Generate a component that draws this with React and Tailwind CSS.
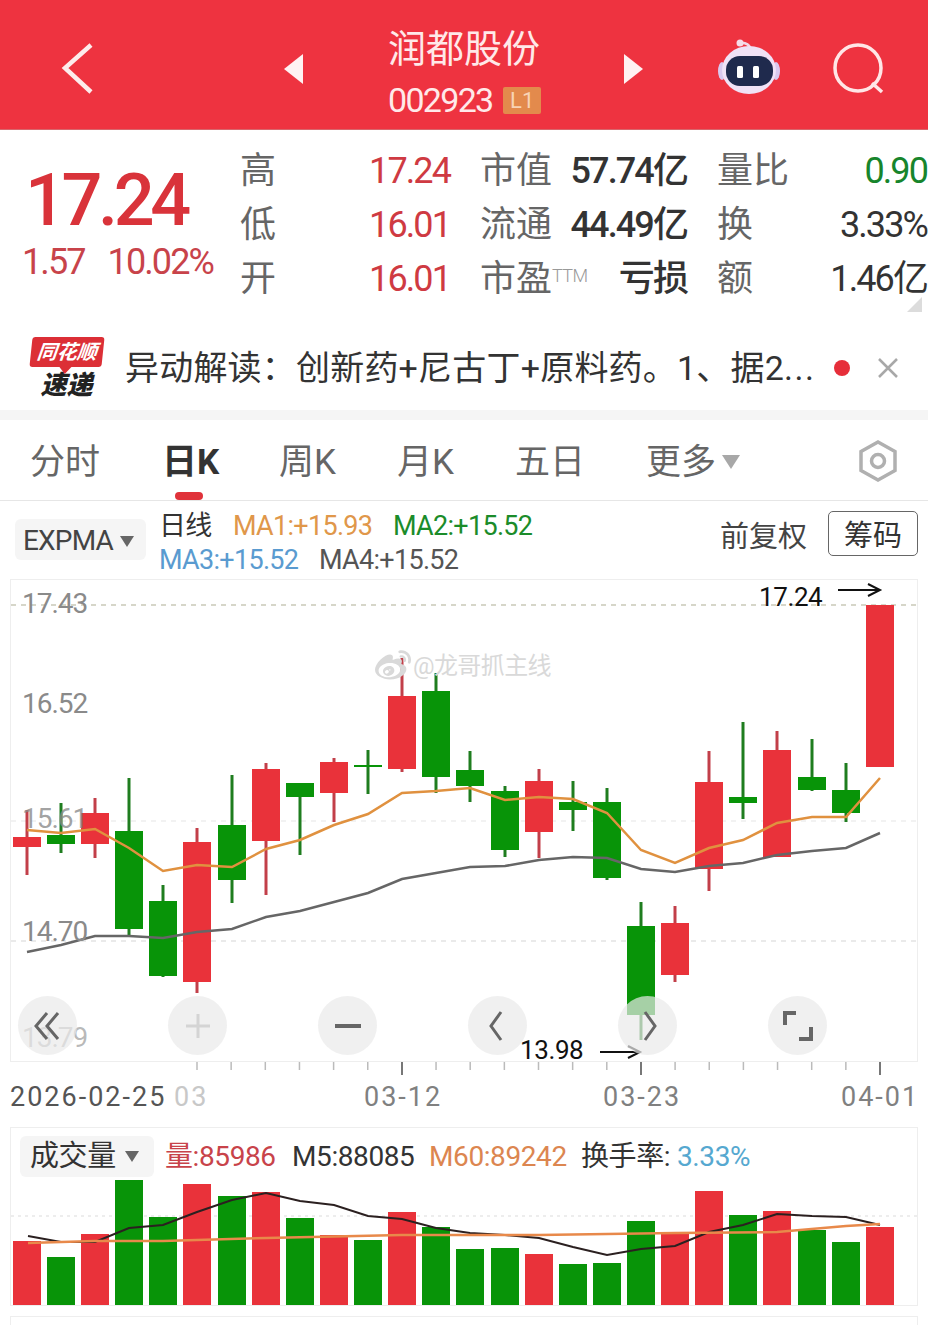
import { FaWeibo } from "react-icons/fa";

const RED = "#e9323a";
const GREEN = "#089408";

// x, body top, body bottom, wick top, wick bottom (page coordinates)
const candles = [
  [27, 837, 847, 810, 875, "r"],
  [61, 835, 844, 803, 853, "g"],
  [95, 813, 844, 798, 858, "r"],
  [129, 831, 929, 778, 935, "g"],
  [163, 901, 976, 885, 977, "g"],
  [197, 842, 982, 828, 993, "r"],
  [232, 825, 880, 775, 903, "g"],
  [266, 769, 841, 763, 895, "r"],
  [300, 783, 797, 783, 855, "g"],
  [334, 762, 793, 758, 822, "r"],
  [368, 765, 767, 750, 794, "g"],
  [402, 696, 769, 658, 772, "r"],
  [436, 691, 777, 673, 793, "g"],
  [470, 770, 786, 751, 802, "g"],
  [505, 791, 850, 786, 857, "g"],
  [539, 781, 832, 769, 858, "r"],
  [573, 802, 810, 781, 831, "g"],
  [607, 802, 878, 788, 880, "g"],
  [641, 926, 1015, 902, 1040, "g"],
  [675, 923, 975, 906, 982, "r"],
  [709, 782, 869, 751, 891, "r"],
  [743, 797, 803, 722, 819, "g"],
  [777, 750, 857, 731, 857, "r"],
  [812, 777, 790, 739, 791, "g"],
  [846, 790, 813, 763, 822, "g"],
  [880, 605, 767, 605, 767, "r"],
];

const ma1 = "27,830 61,833 95,829 129,848 163,871 197,865 232,867 266,849 300,840 334,825 368,814 402,793 436,791 470,788 505,800 539,797 573,799 607,813 641,850 675,863 709,848 743,840 777,823 812,817 846,817 880,778";
const ma2 = "27,952 61,945 95,936 129,936 163,938 197,932 232,929 266,917 300,911 334,902 368,893 402,879 436,873 470,867 505,866 539,860 573,857 607,858 641,869 675,872 709,866 743,863 777,855 812,851 846,848 880,833";

const volumes = [
  [27, 1241, "r"], [61, 1257, "g"], [95, 1234, "r"], [129, 1180, "g"], [163, 1217, "g"], [197, 1184, "r"],
  [232, 1196, "g"], [266, 1192, "r"], [300, 1218, "g"], [334, 1235, "r"], [368, 1240, "g"], [402, 1212, "r"],
  [436, 1227, "g"], [470, 1249, "g"], [505, 1248, "g"], [539, 1254, "r"], [573, 1264, "g"], [607, 1263, "g"],
  [641, 1221, "g"], [675, 1232, "r"], [709, 1191, "r"], [743, 1215, "g"], [777, 1211, "r"], [812, 1230, "g"],
  [846, 1242, "g"], [880, 1227, "r"],
];

const m5 = "28,1236 61,1242 95,1242 129,1228 163,1225 197,1212 232,1200 266,1193 300,1201 334,1205 368,1216 402,1219 436,1228 470,1233 505,1235 539,1238 573,1247 607,1255 641,1249 675,1246 709,1232 743,1225 777,1214 812,1216 846,1217 880,1225";
const m60 = "28,1243 95,1241 163,1241 266,1238 402,1235 539,1235 675,1233 777,1232 846,1226 880,1224";

const minorTicks = Array.from({ length: 21 }, (_, i) => 197 + i * 34.15);

function Stat({ label, value, color, mid }) {
  return (
    <div className="flex items-center justify-between h-[54px]">
      <span className="text-[#666666] text-[36px] leading-none whitespace-nowrap -ml-px">
        {label}
        {mid && <span className="text-[18px] font-light tracking-[-0.6px] text-[#999999] align-[9px]">TTM</span>}
      </span>
      <span className={`text-[36px] leading-none tracking-[-1.9px] whitespace-nowrap ${color}`}>{value}</span>
    </div>
  );
}

function RoundBtn({ children }) {
  return (
    <div className="w-[59px] h-[59px] rounded-full bg-[#e9e9e9]/70 flex items-center justify-center">
      <svg width="36" height="36" viewBox="0 0 36 36" fill="none" strokeWidth="3">
        {children}
      </svg>
    </div>
  );
}

export default function App() {
  return (
    <div className="w-[928px] h-[1325px] overflow-hidden bg-white font-['Roboto','Noto_Sans_CJK_SC',sans-serif]">
      {/* Header */}
      <header className="h-[130px] pt-[8px] bg-[#ee3340] flex items-center border-b border-[#d8666c]">
        <svg className="ml-[60px] shrink-0" width="36" height="54" viewBox="0 0 36 54" fill="none">
          <path d="M31 3 L5 26 L31 50" stroke="#fdecec" strokeWidth="4.5" />
        </svg>
        <div className="ml-[188px] w-0 h-0 border-y-[15px] border-y-transparent border-r-[19px] border-r-[#fff2f2]" />
        <div className="ml-[85px] w-[153px] pt-[4px] flex flex-col shrink-0">
          <span className="text-[38px] leading-[46px] text-[#ffe9e9] whitespace-nowrap">润都股份</span>
          <div className="mt-[13px] flex items-center">
            <span className="text-[34px] leading-[30px] text-[#ffe9e9] tracking-[-1.7px]">002923</span>
            <span className="ml-[11px] w-[39px] h-[27px] bg-[#e38a4c] rounded-[2px] text-[#f8d3b5] text-[22px] leading-[27px] text-center">L1</span>
          </div>
        </div>
        <div className="ml-[83px] w-0 h-0 border-y-[15px] border-y-transparent border-l-[19px] border-l-[#fff2f2]" />
        <svg className="ml-[73px] shrink-0" width="66" height="60" viewBox="716 40 66 60" fill="none">
          <path d="M740 44 Q748 43 751 50" stroke="#f3d7e6" strokeWidth="2.5" />
          <circle cx="740" cy="44" r="3.5" fill="#f6dce8" />
          <ellipse cx="722" cy="72" rx="4" ry="9" fill="#d9c8ee" />
          <ellipse cx="776" cy="72" rx="4" ry="9" fill="#d9c8ee" />
          <ellipse cx="749" cy="71" rx="27" ry="24" fill="#f0e2f6" />
          <rect x="726" y="57" width="47" height="30" rx="14" fill="#1f2a4d" />
          <rect x="737" y="67" width="6" height="12" rx="1.5" fill="#ffffff" />
          <rect x="753" y="67" width="6" height="12" rx="1.5" fill="#ffffff" />
        </svg>
        <svg className="ml-[50px] shrink-0" width="56" height="56" viewBox="832 42 56 56" fill="none">
          <circle cx="858" cy="69" r="23" stroke="#ffe6e6" strokeWidth="3.5" />
          <path d="M872 84 L882 93" stroke="#ffe6e6" strokeWidth="3.5" />
        </svg>
      </header>

      {/* Quote */}
      <section className="relative h-[195px] pt-[14px] flex items-start">
        <div className="w-[241px] shrink-0 pt-[25px]">
          <div className="ml-[25px] text-[#d9333a] text-[72px] leading-[64px] font-medium tracking-[-4.4px]">17.24</div>
          <div className="mt-[9px] flex text-[#c8434a] text-[36px] leading-[40px] tracking-[-1.9px]">
            <span className="ml-[22px]">1.57</span>
            <span className="ml-[23px]">10.02%</span>
          </div>
        </div>
        <div className="grid grid-cols-[209px_206px_209px] gap-x-[31px] shrink-0">
          <div>
            <Stat label="高" value="17.24" color="text-[#cf3a42]" />
            <Stat label="低" value="16.01" color="text-[#cf3a42]" />
            <Stat label="开" value="16.01" color="text-[#cf3a42]" />
          </div>
          <div>
            <Stat label="市值" value="57.74亿" color="text-[#333333] font-medium" />
            <Stat label="流通" value="44.49亿" color="text-[#333333] font-medium" />
            <Stat label="市盈" mid value="亏损" color="text-[#333333] font-medium" />
          </div>
          <div>
            <Stat label="量比" value="0.90" color="text-[#17852c]" />
            <Stat label="换" value="3.33%" color="text-[#333333]" />
            <Stat label="额" value="1.46亿" color="text-[#333333]" />
          </div>
        </div>
        <div className="absolute right-[6px] top-[167px] w-0 h-0 border-l-[15px] border-l-transparent border-b-[15px] border-b-[#dcdcdc]" />
      </section>

      {/* Notice */}
      <section className="h-[85px] flex items-center">
        <div className="ml-[30px] w-[73px] shrink-0 flex flex-col items-center">
          <div className="relative w-[72px] h-[30px] bg-[#dc2f36] rounded-[3px] -skew-x-6 text-white text-[20px] leading-[30px] font-bold italic text-center whitespace-nowrap">
            同花顺
            <div className="absolute left-[30px] top-[30px] w-0 h-0 border-x-[6px] border-x-transparent border-t-[7px] border-t-[#dc2f36]" />
          </div>
          <div className="mt-[5px] text-[#222222] text-[26px] leading-[26px] font-black italic whitespace-nowrap">速递</div>
        </div>
        <div className="ml-[22px] w-[692px] shrink-0 text-[34px] leading-none tracking-[0.2px] text-[#333333] whitespace-nowrap">
          异动解读：创新药+尼古丁+原料药。1、据2<span className="tracking-[1.5px]">...</span>
        </div>
        <div className="ml-[17px] w-[16px] h-[16px] rounded-full bg-[#e62e3a]" />
        <svg className="ml-[26px] shrink-0" width="24" height="24" viewBox="0 0 24 24" fill="none">
          <path d="M3 3 L21 21 M21 3 L3 21" stroke="#a8a8a8" strokeWidth="2.5" />
        </svg>
      </section>

      <div className="h-[10px] bg-[#f5f5f5]" />

      {/* Tabs */}
      <nav className="relative h-[81px] pt-[4px] border-b border-[#e6e6e6] flex items-center text-[35px] leading-none text-[#666666]">
        <span className="ml-[30px] w-[132px]">分时</span>
        <span className="w-[117px] font-bold text-[#333333]">日K</span>
        <span className="w-[118px]">周K</span>
        <span className="w-[118px]">月K</span>
        <span className="w-[131px]">五日</span>
        <span>更多</span>
        <div className="ml-[6px] w-0 h-0 border-x-[9px] border-x-transparent border-t-[14px] border-t-[#a8a8a8]" />
        <svg className="ml-[117px] -mt-[2px] shrink-0" width="42" height="42" viewBox="0 0 42 42" fill="none">
          <path d="M21 2 L38 11.5 V30.5 L21 40 L4 30.5 V11.5 Z" stroke="#b0b0b0" strokeWidth="3.5" />
          <circle cx="21" cy="21" r="6.5" stroke="#b0b0b0" strokeWidth="3.5" />
        </svg>
        <div className="absolute left-[175px] bottom-0 w-[28px] h-[8px] rounded-[4px] bg-[#e0323a]" />
      </nav>

      {/* Legend */}
      <section className="h-[78px] flex items-start">
        <div className="ml-[15px] mt-[18px] w-[131px] h-[41px] rounded-[6px] bg-[#f5f5f5] flex items-center pl-[8px] pt-[3px] shrink-0">
          <span className="text-[28px] leading-none text-[#444444] tracking-[-0.8px]">EXPMA</span>
          <div className="ml-[7px] w-0 h-0 border-x-[7px] border-x-transparent border-t-[11px] border-t-[#666666]" />
        </div>
        <div className="ml-[13px] mt-[8px] w-[541px] shrink-0 text-[27px] leading-[34px] tracking-[-0.7px] whitespace-nowrap">
          <div className="flex">
            <span className="w-[74px] text-[#333333]">日线</span>
            <span className="w-[160px] text-[#e0974a]">MA1:+15.93</span>
            <span className="text-[#1b8c2a]">MA2:+15.52</span>
          </div>
          <div className="flex">
            <span className="w-[160px] text-[#5a9bd0]">MA3:+15.52</span>
            <span className="text-[#555555]">MA4:+15.52</span>
          </div>
        </div>
        <span className="ml-[20px] mt-[18px] text-[29px] leading-[36px] text-[#444444] whitespace-nowrap">前复权</span>
        <div className="ml-[21px] mt-[10px] w-[90px] h-[45px] pt-[3px] rounded-[5px] border border-[#666666] text-[29px] leading-[43px] text-[#333333] text-center shrink-0">筹码</div>
      </section>

      {/* Candles */}
      <section className="relative ml-[10px] w-[908px] h-[483px] border-x border-y border-[#eeeeee]">
        <svg className="absolute -left-px -top-px" width="908" height="483" viewBox="10 579 908 483" fill="none">
          <path d="M11 605 H917" stroke="#c9c9b8" strokeWidth="1.5" strokeDasharray="5 5" />
          <path d="M11 821 H917" stroke="#eeeeee" strokeWidth="1.5" strokeDasharray="5 5" />
          <path d="M11 941 H917" stroke="#e4e4e4" strokeWidth="1.5" strokeDasharray="5 5" />
          {candles.map(([x, top, bottom, wickTop, wickBottom, side]) => (
            <g key={x}>
              <path d={`M${x} ${wickTop} V${wickBottom}`} stroke={side === "r" ? "#c23f49" : "#1f7d1f"} strokeWidth="3" />
              <rect x={x - 14} y={top} width="28" height={bottom - top} fill={side === "r" ? RED : GREEN} />
            </g>
          ))}
          <polyline points={ma2} stroke="#666666" strokeWidth="2.5" />
          <polyline points={ma1} stroke="#e0913f" strokeWidth="2.5" />
          <path d="M838 590 H878 M868 584 L880 590 L868 596" stroke="#111111" strokeWidth="2" />
          <path d="M600 1052 H638 M628 1046 L640 1052 L628 1058" stroke="#111111" strokeWidth="2" />
        </svg>

        <span className="absolute left-[11px] top-[7px] text-[28px] leading-[34px] text-[#8a8a8a] tracking-[-1px]">17.43</span>
        <span className="absolute left-[11px] top-[107px] text-[28px] leading-[34px] text-[#8a8a8a] tracking-[-1px]">16.52</span>
        <span className="absolute left-[11px] top-[222px] text-[28px] leading-[34px] text-[#8a8a8a]/80 tracking-[-1px]">15.61</span>
        <span className="absolute left-[11px] top-[335px] text-[28px] leading-[34px] text-[#8a8a8a] tracking-[-1px]">14.70</span>
        <span className="absolute left-[11px] top-[441px] text-[28px] leading-[34px] text-[#8a8a8a]/60 tracking-[-1px]">13.79</span>

        <span className="absolute left-[748px] top-[0px] text-[26px] leading-[34px] tracking-[-0.4px] text-[#111111]">17.24</span>
        <span className="absolute left-[509px] top-[453px] text-[26px] leading-[34px] tracking-[-0.4px] text-[#111111]">13.98</span>

        <div className="absolute left-[364px] top-[68px] flex items-center text-[#d9d9d9] whitespace-nowrap">
          <FaWeibo size={36} />
          <span className="ml-[2px] text-[24px] leading-[34px] tracking-[-0.6px]">@龙哥抓主线</span>
        </div>

        {/* Chart controls */}
        <div className="absolute left-[7px] top-[416px] flex gap-[91px]">
          <RoundBtn>
            <path d="M17 5 L6 18 L17 31 M28 5 L17 18 L28 31" stroke="#666666" />
          </RoundBtn>
          <RoundBtn>
            <path d="M18 6 V30 M6 18 H30" stroke="#d4d4d4" />
          </RoundBtn>
          <RoundBtn>
            <path d="M5 18 H31" stroke="#666666" strokeWidth="4" />
          </RoundBtn>
          <RoundBtn>
            <path d="M21 4 L11 18 L21 32" stroke="#666666" />
          </RoundBtn>
          <RoundBtn>
            <path d="M15 4 L25 18 L15 32" stroke="#666666" />
          </RoundBtn>
          <RoundBtn>
            <path d="M16 5 H5 V17 M31 19 V31 H19" stroke="#666666" strokeWidth="4" />
          </RoundBtn>
        </div>
      </section>

      {/* Time axis */}
      <section className="h-[65px]">
        <svg className="block" width="928" height="14" viewBox="0 1062 928 14" fill="none">
          {minorTicks.map((x) => (
            <path key={x} d={`M${x} 1062 V1070`} stroke="#bbbbbb" strokeWidth="1.5" />
          ))}
          {[402, 641, 880].map((x) => (
            <path key={x} d={`M${x} 1062 V1075`} stroke="#777777" strokeWidth="2" />
          ))}
        </svg>
        <div className="mt-[4px] h-[34px] flex text-[27px] leading-[34px] tracking-[2px] text-[#808080] whitespace-nowrap">
          <span className="ml-[10px] w-[164px] text-[#555555]">2026-02-25</span>
          <span className="w-[190px] text-[#c8c8c8]">03</span>
          <span className="w-[239px]">03-12</span>
          <span className="w-[238px]">03-23</span>
          <span>04-01</span>
        </div>
      </section>

      {/* Volume */}
      <section className="relative ml-[10px] w-[908px] h-[179px] border-x border-y border-[#eeeeee]">
        <svg className="absolute -left-px -top-px" width="908" height="179" viewBox="10 1127 908 179" fill="none">
          <path d="M11 1216 H917" stroke="#e8e8e8" strokeWidth="1.5" strokeDasharray="3 4" />
          {volumes.map(([x, top, side]) => (
            <rect key={x} x={x - 14} y={top} width="28" height={1305 - top} fill={side === "r" ? RED : GREEN} />
          ))}
          <polyline points={m5} stroke="#2b2020" strokeWidth="2" />
          <polyline points={m60} stroke="#e8894a" strokeWidth="2.5" />
        </svg>
        <div className="relative pt-[8px] pl-[9px] flex items-center text-[28px] leading-none tracking-[-0.4px] whitespace-nowrap">
          <div className="w-[134px] h-[41px] rounded-[6px] bg-[#f5f5f5] flex items-center pl-[10px] shrink-0">
            <span className="text-[29px] text-[#333333]">成交量</span>
            <div className="ml-[9px] w-0 h-0 border-x-[7px] border-x-transparent border-t-[11px] border-t-[#666666]" />
          </div>
          <span className="ml-[11px] w-[127px] text-[#c8434a]">量:85986</span>
          <span className="w-[137px] text-[#333333]">M5:88085</span>
          <span className="w-[152px] text-[#dc8650]">M60:89242</span>
          <span className="w-[96px] text-[#333333]">换手率:</span>
          <span className="text-[#56a8d0]">3.33%</span>
        </div>
      </section>

      <div className="mt-[10px] ml-[10px] w-[908px] h-[20px] border-x border-t border-[#eeeeee]" />
    </div>
  );
}
